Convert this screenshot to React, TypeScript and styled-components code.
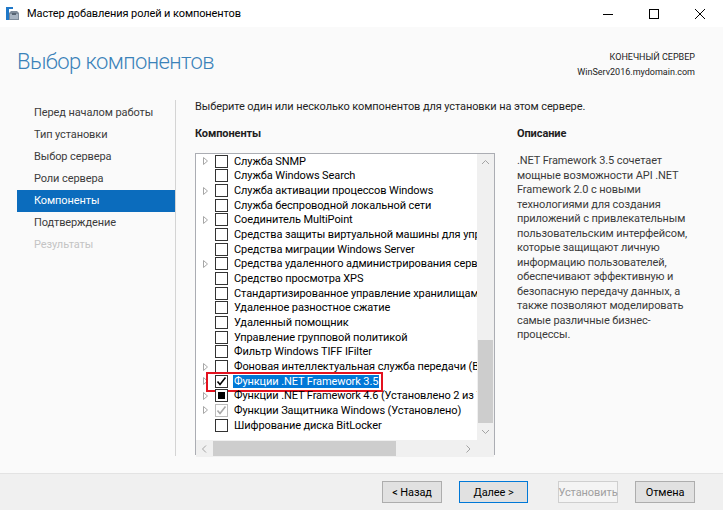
import React from "react"
import styled, {createGlobalStyle} from "styled-components"

const GlobalStyle = createGlobalStyle`
    html, body {
        margin: 0;
        padding: 0;
        background: #ffffff;
    }
    body {
        font-family: Roboto, "Noto Sans", sans-serif;
        font-size: 11px;
        letter-spacing: -0.1px;
        color: #000;
    }
`

type Item = {
    label: string
    expander?: boolean
    state?: "off" | "on" | "partial" | "disabled"
    selected?: boolean
}

const items: Item[] = [
    {label: "Служба SNMP", expander: true},
    {label: "Служба Windows Search"},
    {label: "Служба активации процессов Windows", expander: true},
    {label: "Служба беспроводной локальной сети"},
    {label: "Соединитель MultiPoint", expander: true},
    {label: "Средства защиты виртуальной машины для управления экранированными виртуальными машинами"},
    {label: "Средства миграции Windows Server"},
    {label: "Средства удаленного администрирования сервера", expander: true},
    {label: "Средство просмотра XPS"},
    {label: "Стандартизированное управление хранилищами Windows"},
    {label: "Удаленное разностное сжатие"},
    {label: "Удаленный помощник"},
    {label: "Управление групповой политикой"},
    {label: "Фильтр Windows TIFF IFilter"},
    {label: "Фоновая интеллектуальная служба передачи (BITS)", expander: true},
    {label: "Функции .NET Framework 3.5", expander: true, state: "on", selected: true},
    {label: "Функции .NET Framework 4.6 (Установлено 2 из 7)", expander: true, state: "partial"},
    {label: "Функции Защитника Windows (Установлено)", expander: true, state: "disabled"},
    {label: "Шифрование диска BitLocker"},
]

const steps = [
    {label: "Перед началом работы"},
    {label: "Тип установки"},
    {label: "Выбор сервера"},
    {label: "Роли сервера"},
    {label: "Компоненты", active: true},
    {label: "Подтверждение"},
    {label: "Результаты", disabled: true},
]

// wrapped the same way the dialog wraps it
const description = [
    ".NET Framework 3.5 сочетает",
    "мощные возможности API .NET",
    "Framework 2.0 с новыми",
    "технологиями для создания",
    "приложений с привлекательным",
    "пользовательским интерфейсом,",
    "которые защищают личную",
    "информацию пользователей,",
    "обеспечивают эффективную и",
    "безопасную передачу данных, а",
    "также позволяют моделировать",
    "самые различные бизнес-",
    "процессы.",
]

const Chevron = ({dir}: {dir: "up" | "down" | "left" | "right"}) => {
    const pts = {
        up: "1,5 4.5,1.5 8,5",
        down: "1,2 4.5,5.5 8,2",
        left: "5,0.5 1.5,4 5,7.5",
        right: "1.5,0.5 5,4 1.5,7.5",
    }[dir]
    const w = dir === "up" || dir === "down" ? 9 : 7
    const h = dir === "up" || dir === "down" ? 7 : 8
    return (
        <svg width={w} height={h} viewBox={`0 0 ${w} ${h}`}>
            <polyline points={pts} fill="none" stroke="#a3a3a3" strokeWidth="1"/>
        </svg>
    )
}

const AppIcon = () => (
    <svg width="14" height="14" viewBox="0 0 14 14">
        <rect x="0" y="0" width="3" height="13" fill="#1f78c8"/>
        <rect x="0" y="0" width="7" height="2" fill="#1f78c8"/>
        <path d="M3 6 L5 4 L11 4 L13 6 L13 13 L3 13 Z" fill="#7d8a99"/>
        <rect x="4" y="7" width="8" height="5" fill="#a8b4c2"/>
        <rect x="6" y="6" width="4" height="2" fill="#566372"/>
    </svg>
)

export default function App() {
    return (
        <Window>
            <GlobalStyle/>
            <TitleBar>
                <TitleLeft>
                    <AppIcon/>
                    <TitleText>Мастер добавления ролей и компонентов</TitleText>
                </TitleLeft>
                <Controls>
                    <ControlButton>
                        <svg width="10" height="10" viewBox="0 0 10 10">
                            <line x1="0" y1="5.5" x2="10" y2="5.5" stroke="#000" strokeWidth="1"/>
                        </svg>
                    </ControlButton>
                    <ControlButton>
                        <svg width="10" height="10" viewBox="0 0 10 10">
                            <rect x="0.5" y="0.5" width="9" height="9" fill="none" stroke="#000" strokeWidth="1"/>
                        </svg>
                    </ControlButton>
                    <ControlButton>
                        <svg width="10" height="10" viewBox="0 0 10 10">
                            <line x1="0" y1="0" x2="10" y2="10" stroke="#000" strokeWidth="1"/>
                            <line x1="10" y1="0" x2="0" y2="10" stroke="#000" strokeWidth="1"/>
                        </svg>
                    </ControlButton>
                </Controls>
            </TitleBar>

            <Body>
                <Header>
                    <Heading>Выбор компонентов</Heading>
                    <ServerInfo>
                        <div>КОНЕЧНЫЙ СЕРВЕР</div>
                        <div>WinServ2016.mydomain.com</div>
                    </ServerInfo>
                </Header>

                <Main>
                    <Nav>
                        {steps.map(s => (
                            <NavItem key={s.label} $active={!!s.active} $disabled={!!s.disabled}>
                                {s.label}
                            </NavItem>
                        ))}
                    </Nav>

                    <Content>
                        <Intro>Выберите один или несколько компонентов для установки на этом сервере.</Intro>
                        <Columns>
                            <ListColumn>
                                <SectionTitle>Компоненты</SectionTitle>
                                <ListBox>
                                    <ListViewport>
                                        {items.map(it => (
                                            <Row key={it.label}>
                                                <Expander>
                                                    {it.expander && (
                                                        <svg width="5" height="8" viewBox="0 0 5 8">
                                                            <path d="M0.5 0.5 L4.5 4 L0.5 7.5 Z" fill="none" stroke="#a6a6a6" strokeWidth="1"/>
                                                        </svg>
                                                    )}
                                                </Expander>
                                                <CheckBox $state={it.state ?? "off"}>
                                                    {(it.state === "on" || it.state === "disabled") && (
                                                        <svg width="11" height="11" viewBox="0 0 11 11">
                                                            <polyline points="1.5,5.5 4,8.5 9.5,1.5" fill="none"
                                                                      stroke={it.state === "on" ? "#000" : "#a8a8a8"}
                                                                      strokeWidth="1.6"/>
                                                        </svg>
                                                    )}
                                                    {it.state === "partial" && <Partial/>}
                                                </CheckBox>
                                                <Label $selected={!!it.selected}>{it.label}</Label>
                                                {it.selected && <Marker/>}
                                            </Row>
                                        ))}
                                    </ListViewport>
                                    <VScroll>
                                        <ArrowCell><Chevron dir="up"/></ArrowCell>
                                        <VTrack>
                                            <VThumb $offset={169} $size={83}/>
                                        </VTrack>
                                        <ArrowCell><Chevron dir="down"/></ArrowCell>
                                    </VScroll>
                                    <HScroll>
                                        <HArrowCell><Chevron dir="left"/></HArrowCell>
                                        <HTrack>
                                            <HThumb $size={183}/>
                                        </HTrack>
                                        <HArrowCell><Chevron dir="right"/></HArrowCell>
                                    </HScroll>
                                    <Corner/>
                                </ListBox>
                            </ListColumn>
                            <DescColumn>
                                <SectionTitle>Описание</SectionTitle>
                                <Description>
                                    {description.map(l => <DescLine key={l}>{l}</DescLine>)}
                                </Description>
                            </DescColumn>
                        </Columns>
                    </Content>
                </Main>
            </Body>

            <Footer>
                <Button>&lt; Назад</Button>
                <Button $primary $w={69}>Далее &gt;</Button>
                <Button $disabled $gap={30}>Установить</Button>
                <Button>Отмена</Button>
            </Footer>
        </Window>
    )
}

const Window = styled.div`
    width: 723px;
    height: 510px;
    display: flex;
    flex-direction: column;
    overflow: hidden;
    background: #fafafa;
`

const TitleBar = styled.div`
    height: 27px;
    flex: none;
    background: #ffffff;
    display: flex;
    align-items: center;
    justify-content: space-between;
`

const TitleLeft = styled.div`
    display: flex;
    align-items: center;
    gap: 7px;
    padding-left: 6px;
`

const TitleText = styled.span`
    font-size: 11px;
    color: #000;
`

const Controls = styled.div`
    display: flex;
    height: 100%;
`

const ControlButton = styled.div`
    width: 46px;
    display: flex;
    align-items: center;
    justify-content: center;
`

const Body = styled.div`
    flex: 1;
    display: flex;
    flex-direction: column;
    background: #fafafa;
    min-height: 0;
`

const Header = styled.div`
    display: flex;
    justify-content: space-between;
    align-items: flex-start;
    padding: 20px 28px 0 17px;
    height: 73px;
    box-sizing: border-box;
`

const Heading = styled.h1`
    margin: 0;
    font-family: Roboto, "Noto Sans", sans-serif;
    font-weight: 300;
    font-size: 22px;
    line-height: 30px;
    letter-spacing: -0.6px;
    color: #3a82b9;
`

const ServerInfo = styled.div`
    margin-top: 3px;
    text-align: right;
    font-size: 9px;
    line-height: 15px;
    letter-spacing: 0;
    color: #222;
`

const Main = styled.div`
    flex: 1;
    display: flex;
    min-height: 0;
`

const Nav = styled.div`
    width: 176px;
    flex: none;
    box-sizing: border-box;
    padding: 2px 0 0 17px;
    border-right: 1px solid #d4d4d4;
    margin-bottom: 17px;
`

const NavItem = styled.div<{ $active: boolean; $disabled: boolean }>`
    height: 22px;
    line-height: 22px;
    padding-left: 17px;
    background: ${p => (p.$active ? "#0b6cbd" : "transparent")};
    color: ${p => (p.$active ? "#fff" : p.$disabled ? "#c4c4c4" : "#3c3c3c")};
`

const Content = styled.div`
    flex: 1;
    display: flex;
    flex-direction: column;
    padding-left: 19px;
    min-width: 0;
`

const Intro = styled.div`
    height: 27px;
    line-height: 14px;
    color: #1e1e1e;
`

const Columns = styled.div`
    display: flex;
    gap: 22px;
`

const ListColumn = styled.div`
    width: 300px;
    flex: none;
    display: flex;
    flex-direction: column;
`

const DescColumn = styled.div`
    flex: 1;
    padding-right: 20px;
`

const SectionTitle = styled.div`
    font-weight: 700;
    line-height: 14px;
    height: 26px;
    color: #1e1e1e;
`

const ListBox = styled.div`
    height: 302px;
    box-sizing: border-box;
    border: 1px solid #abadb3;
    background: #fff;
    display: grid;
    grid-template-columns: 1fr 17px;
    grid-template-rows: 1fr 17px;
`

const ListViewport = styled.div`
    overflow: hidden;
    position: relative;
`

const Row = styled.div`
    position: relative;
    height: 14.67px;
    display: flex;
    align-items: center;
    white-space: nowrap;
`

const Expander = styled.div`
    width: 19px;
    padding-left: 7px;
    box-sizing: border-box;
    display: flex;
    align-items: center;
    flex: none;
`

const CheckBox = styled.div<{ $state: string }>`
    width: 13px;
    height: 13px;
    box-sizing: border-box;
    border: 1px solid ${p => (p.$state === "disabled" ? "#bcbcbc" : "#333")};
    background: #fff;
    display: flex;
    align-items: center;
    justify-content: center;
    flex: none;
    margin-right: 5px;
`

const Partial = styled.div`
    width: 7px;
    height: 7px;
    background: #000;
`

const Label = styled.span<{ $selected: boolean }>`
    line-height: 13px;
    padding: 0 1px;
    background: ${p => (p.$selected ? "#0078d7" : "transparent")};
    color: ${p => (p.$selected ? "#fff" : "#000")};
`

const Marker = styled.div`
    position: absolute;
    left: 10px;
    top: -2px;
    width: 177px;
    height: 20px;
    box-sizing: border-box;
    border: 2px solid #e3121f;
`

const VScroll = styled.div`
    background: #f0f0f0;
    display: flex;
    flex-direction: column;
`

const ArrowCell = styled.div`
    height: 17px;
    flex: none;
    display: flex;
    align-items: center;
    justify-content: center;
`

const VTrack = styled.div`
    flex: 1;
    padding: 0 1px;
`

const VThumb = styled.div<{ $offset: number; $size: number }>`
    margin-top: ${p => p.$offset}px;
    height: ${p => p.$size}px;
    background: #cdcdcd;
`

const HScroll = styled.div`
    background: #f0f0f0;
    display: flex;
`

const HArrowCell = styled.div`
    width: 17px;
    flex: none;
    display: flex;
    align-items: center;
    justify-content: center;
`

const HTrack = styled.div`
    flex: 1;
    padding: 1px 0;
    display: flex;
`

const HThumb = styled.div<{ $size: number }>`
    width: ${p => p.$size}px;
    background: #cdcdcd;
`

const Corner = styled.div`
    background: #f0f0f0;
`

const Description = styled.div`
    color: #3a3a3a;
    margin-top: 1px;
`

const DescLine = styled.div`
    height: 14.5px;
    line-height: 14.5px;
    white-space: nowrap;
`

const Footer = styled.div`
    height: 37px;
    flex: none;
    box-sizing: border-box;
    border-top: 1px solid #e3e3e3;
    background: #f0f0f0;
    display: flex;
    align-items: center;
    justify-content: flex-end;
    padding-right: 28px;
`

const Button = styled.div<{ $primary?: boolean; $disabled?: boolean; $w?: number; $gap?: number }>`
    width: ${p => p.$w ?? 60}px;
    height: 22px;
    box-sizing: border-box;
    margin-left: ${p => p.$gap ?? 17}px;
    display: flex;
    align-items: center;
    justify-content: center;
    background: ${p => (p.$disabled ? "#f4f4f4" : "#e1e1e1")};
    border: 1px solid ${p => (p.$primary ? "#0078d7" : p.$disabled ? "#cfcfcf" : "#adadad")};
    color: ${p => (p.$disabled ? "#a0a0a0" : "#000")};
`
